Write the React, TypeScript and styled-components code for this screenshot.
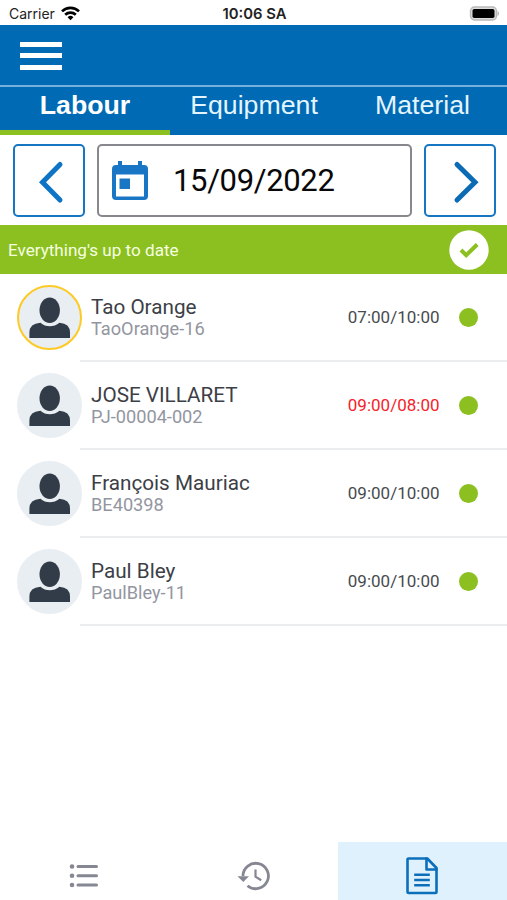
import React from "react";
import styled, { createGlobalStyle } from "styled-components";

const GlobalStyle = createGlobalStyle`
  * { box-sizing: border-box; }
  body { margin: 0; background: #fff; font-family: Roboto, sans-serif; }
  button { padding: 0; margin: 0; border: 0; background: none; font: inherit; }
  svg { display: block; flex: none; }
`;

const Screen = styled.div`
  display: flex;
  flex-direction: column;
  width: 507px;
  height: 900px;
  overflow: hidden;
  background: #fff;
`;

const StatusBar = styled.div`
  display: grid;
  grid-template-columns: 1fr auto 1fr;
  align-items: center;
  height: 25px;
  padding: 2px 7px 0 9px;
  font-family: Inter, sans-serif;
  line-height: 20px;
  color: #222;
`;

const Carrier = styled.div`
  display: flex;
  align-items: center;
  gap: 6px;
  font-size: 14px;
`;

const Clock = styled.div`
  font-size: 14.8px;
  font-weight: 600;
`;

const BatterySlot = styled.div`
  display: flex;
  justify-content: flex-end;
`;

const AppBar = styled.header`
  display: flex;
  align-items: center;
  height: 62px;
  padding: 1px 20px 0;
  background: #006ab5;
  border-bottom: 2px solid #75b0df;
`;

const MenuButton = styled.button`
  display: flex;
  flex-direction: column;
  gap: 6.5px;
  width: 41.5px;
`;

const MenuLine = styled.span`
  height: 5px;
  background: #fff;
`;

const Tabs = styled.nav`
  display: grid;
  grid-template-columns: 170px 168px 169px;
  height: 48px;
  background: #006ab5;
`;

const Tab = styled.button<{ $active?: boolean }>`
  height: 48px;
  padding-bottom: 7px;
  border-bottom: 5px solid ${(p) => (p.$active ? "#8cbf20" : "transparent")};
  font-family: "Liberation Sans", Arial, sans-serif;
  font-size: 26.7px;
  font-weight: ${(p) => (p.$active ? 700 : 400)};
  line-height: 36px;
  color: ${(p) => (p.$active ? "#fff" : "#e4f5ff")};
`;

const DateRow = styled.div`
  display: grid;
  grid-template-columns: 72px 315px 72px;
  column-gap: 12px;
  height: 90px;
  padding: 9px 12px 8px 13px;
`;

const ArrowButton = styled.button`
  display: flex;
  align-items: center;
  justify-content: center;
  border: 2px solid #1676c2;
  border-radius: 5px;
`;

const DateField = styled.div`
  display: flex;
  align-items: center;
  gap: 25px;
  padding-left: 13px;
  border: 2px solid #87878e;
  border-radius: 5px;
  font-size: 31px;
  line-height: 36px;
  letter-spacing: -0.35px;
  color: #080808;
`;

const DateText = styled.span`
  white-space: nowrap;
`;

const SyncBanner = styled.div`
  display: flex;
  align-items: center;
  justify-content: space-between;
  height: 49px;
  padding: 0 18px 0 8px;
  background: #8cbf20;
  font-size: 17.1px;
  color: #f5ffe0;
`;

const List = styled.ul`
  flex: 1;
  margin: 0;
  padding: 0;
  list-style: none;
`;

const Row = styled.li`
  display: grid;
  grid-template-columns: 64px 1fr;
  height: 88px;
  padding-left: 16px;
`;

const Avatar = styled.div<{ $ring?: boolean }>`
  display: flex;
  width: 65px;
  height: 65px;
  margin: 10.5px 0 0 0.5px;
  border-radius: 50%;
  border: 2px solid ${(p) => (p.$ring ? "#fdca25" : "#e9eef3")};
  background: #e9eef3;
`;

const RowBody = styled.div`
  display: flex;
  align-items: center;
  padding: 0 29px 0 11px;
  border-bottom: 2px solid #eaecee;
`;

const Person = styled.div`
  flex: 1;
  padding-top: 1px;
`;

const Name = styled.div`
  font-size: 20.7px;
  line-height: 22px;
  color: #3c4046;
`;

const Code = styled.div`
  font-size: 18.2px;
  line-height: 21px;
  color: #93969f;
`;

const Hours = styled.div<{ $alert?: boolean }>`
  font-size: 17px;
  color: ${(p) => (p.$alert ? "#f5222a" : "#484b50")};
`;

const Dot = styled.span`
  width: 19px;
  height: 19px;
  margin-left: 19.5px;
  border-radius: 50%;
  background: #8cbf20;
`;

const BottomBar = styled.nav`
  display: grid;
  grid-template-columns: repeat(3, 1fr);
  height: 58px;
`;

const BottomItem = styled.button<{ $active?: boolean }>`
  display: flex;
  align-items: center;
  justify-content: center;
  padding: 9px 1px 0 0;
  background: ${(p) => (p.$active ? "#e0f1fe" : "transparent")};
`;

const WifiIcon = () => (
  <svg width="19" height="15" viewBox="0 0 19 15" fill="none" stroke="#000" strokeWidth="2.7">
    <path d="M1 5.4a12.2 12.2 0 0 1 17 0" />
    <path d="M4.2 8.8a7.7 7.7 0 0 1 10.6 0" />
    <path d="M9.5 14.2 6.6 11.3a4.1 4.1 0 0 1 5.8 0Z" fill="#000" stroke="none" />
  </svg>
);

const BatteryIcon = () => (
  <svg width="31" height="15" viewBox="0 0 31 15">
    <rect x="1.5" y="1" width="26" height="13" rx="4" fill="#ddd" stroke="#b9b9b9" strokeWidth="1.4" />
    <rect x="3.5" y="3" width="22" height="9" rx="1.8" fill="#000" />
    <path d="M28.5 5v5c2-.7 2-4.3 0-5Z" fill="#b9b9b9" />
  </svg>
);

const Chevron = ({ right }: { right?: boolean }) => (
  <svg width="68" height="68" viewBox="0 0 68 68" fill="none" stroke={right ? "#0b6cb5" : "#0d74c6"} strokeWidth="5" strokeLinecap="round" strokeLinejoin="miter">
    <path d={right ? "M31 17.5 49 35.3 31 53" : "M45 17.500 27.500 35.300 45 53"} />
  </svg>
);

const CalendarIcon = () => (
  <svg width="36" height="40" viewBox="0 0 36 40" fill="#1976c5">
    <path fillRule="evenodd" d="M6 0h4v4h16V0h4v4h2a4 4 0 0 1 4 4v27a4 4 0 0 1-4 4H4a4 4 0 0 1-4-4V8a4 4 0 0 1 4-4h2ZM4 13.500v22h28v-22Z" />
    <path d="M7.500 17.500h10.500v10.500H7.500z" />
  </svg>
);

const CheckIcon = () => (
  <svg width="40" height="40" viewBox="0 0 40 40">
    <circle cx="20" cy="20" r="19.7" fill="#fff" />
    <path d="m12 20 5.200 5.200 11-10.700" fill="none" stroke="#8cbf20" strokeWidth="4" />
  </svg>
);

const PersonIcon = () => (
  <svg width="61" height="61" viewBox="0 0 61 61" fill="#323c48">
    <ellipse cx="30.700" cy="23.200" rx="10.200" ry="12.800" />
    <path d="M10.400 51V45.500q0-9 11-9.800Q25.500 39.200 30.800 39.200T40.500 35.700Q51 36.500 51 45.500V51Z" />
  </svg>
);

const ListIcon = () => (
  <svg width="30" height="26" viewBox="0 0 30 26" fill="none" stroke="#858893" strokeWidth="3" strokeLinecap="round">
    <path d="M9 3.500h18.500M9 12.800h18.500M9 22h18.500" />
    <path d="M3 3.500h.02M3 12.800h.02M3 22h.02" strokeWidth="4.600" />
  </svg>
);

const HistoryIcon = () => (
  <svg width="33" height="30" viewBox="0 0 33 30" fill="none" stroke="#858893" strokeWidth="2.800">
    <path d="M6 15A12.700 12.700 0 1 1 10.500 24.700" />
    <path d="M.5 15.200h11.500L6.300 21Z" fill="#858893" stroke="none" />
    <path d="M18.500 8.500v7.200l5.700 3.600" strokeWidth="2.200" />
  </svg>
);

const DocumentIcon = () => (
  <svg width="32" height="38" viewBox="0 0 32 38" fill="none" stroke="#0b6fb9" strokeWidth="2.600" strokeLinejoin="round" strokeLinecap="round">
    <path d="M2.500 1.500h18.800L30.500 11v24a1 1 0 0 1-1 1h-27a1 1 0 0 1-1-1V2.500a1 1 0 0 1 1-1Z" />
    <path d="M20.500 1.500V12.500h10" />
    <path d="M9.500 17.700h13M9.500 23h13M9.500 28.300h13" strokeLinecap="square" />
  </svg>
);

type Worker = { name: string; code: string; hours: string; ring?: boolean; alert?: boolean };

const workers: Worker[] = [
  { name: "Tao Orange", code: "TaoOrange-16", hours: "07:00/10:00", ring: true },
  { name: "JOSE VILLARET", code: "PJ-00004-002", hours: "09:00/08:00", alert: true },
  { name: "François Mauriac", code: "BE40398", hours: "09:00/10:00" },
  { name: "Paul Bley", code: "PaulBley-11", hours: "09:00/10:00" },
];

export default function App() {
  return (
    <>
      <GlobalStyle />
      <Screen>
        <StatusBar>
          <Carrier>
            Carrier
            <WifiIcon />
          </Carrier>
          <Clock>10:06 SA</Clock>
          <BatterySlot>
            <BatteryIcon />
          </BatterySlot>
        </StatusBar>
        <AppBar>
          <MenuButton aria-label="Menu">
            <MenuLine />
            <MenuLine />
            <MenuLine />
          </MenuButton>
        </AppBar>
        <Tabs>
          <Tab $active>Labour</Tab>
          <Tab>Equipment</Tab>
          <Tab>Material</Tab>
        </Tabs>
        <DateRow>
          <ArrowButton aria-label="Previous day">
            <Chevron />
          </ArrowButton>
          <DateField>
            <CalendarIcon />
            <DateText>15/09/2022</DateText>
          </DateField>
          <ArrowButton aria-label="Next day">
            <Chevron right />
          </ArrowButton>
        </DateRow>
        <SyncBanner>
          <span>Everything's up to date</span>
          <CheckIcon />
        </SyncBanner>
        <List>
          {workers.map((w) => (
            <Row key={w.code}>
              <Avatar $ring={w.ring}>
                <PersonIcon />
              </Avatar>
              <RowBody>
                <Person>
                  <Name>{w.name}</Name>
                  <Code>{w.code}</Code>
                </Person>
                <Hours $alert={w.alert}>{w.hours}</Hours>
                <Dot />
              </RowBody>
            </Row>
          ))}
        </List>
        <BottomBar>
          <BottomItem aria-label="List">
            <ListIcon />
          </BottomItem>
          <BottomItem aria-label="History">
            <HistoryIcon />
          </BottomItem>
          <BottomItem $active aria-label="Report">
            <DocumentIcon />
          </BottomItem>
        </BottomBar>
      </Screen>
    </>
  );
}
